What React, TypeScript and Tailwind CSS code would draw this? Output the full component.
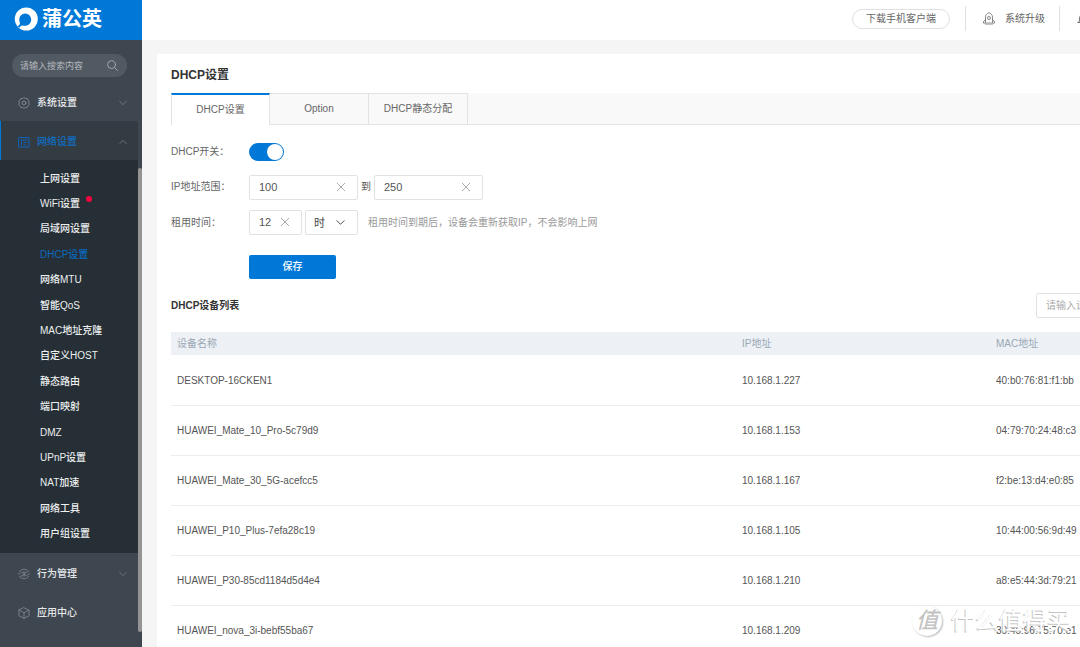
import { useState } from "react";
import type { ReactNode } from "react";

const subItems = [
  "上网设置", "WiFi设置", "局域网设置", "DHCP设置", "网络MTU", "智能QoS", "MAC地址克隆", "自定义HOST",
  "静态路由", "端口映射", "DMZ", "UPnP设置", "NAT加速", "网络工具", "用户组设置",
];

const devices = [
  ["DESKTOP-16CKEN1", "10.168.1.227", "40:b0:76:81:f1:bb"],
  ["HUAWEI_Mate_10_Pro-5c79d9", "10.168.1.153", "04:79:70:24:48:c3"],
  ["HUAWEI_Mate_30_5G-acefcc5", "10.168.1.167", "f2:be:13:d4:e0:85"],
  ["HUAWEI_P10_Plus-7efa28c19", "10.168.1.105", "10:44:00:56:9d:49"],
  ["HUAWEI_P30-85cd1184d5d4e4", "10.168.1.210", "a8:e5:44:3d:79:21"],
  ["HUAWEI_nova_3i-bebf55ba67", "10.168.1.209", "30:45:96:75:70:e1"],
];

function Icon({ children, className = "" }: { children: ReactNode; className?: string }) {
  return (
    <svg viewBox="0 0 12 12" fill="none" stroke="currentColor" strokeLinecap="round" strokeLinejoin="round" className={`shrink-0 ${className}`} aria-hidden="true">
      {children}
    </svg>
  );
}

function Chevron({ up = false, className = "" }: { up?: boolean; className?: string }) {
  return (
    <Icon className={className}>
      <path d={up ? "M2 8l4-4 4 4" : "M2 4l4 4 4-4"} />
    </Icon>
  );
}

const gear = (
  <Icon className="size-3">
    <path strokeWidth="0.9" d="M6 .7l1.500.8 1.800.1.9 1.500 1 1.400-.5 1.500.5 1.600-1.200 1.300-.9 1.500-1.700.1-1.400.8-1.500-.8-1.700-.1-.9-1.500L.8 7.600 1.300 6 .8 4.500l1.100-1.400.9-1.500 1.700-.1z" />
    <circle cx="6" cy="6" r="1.900" strokeWidth="0.9" />
  </Icon>
);
const network = (
  <Icon className="size-3">
    <path d="M1 1.500h10v9.500H1zM3.500 4h5.500M3.500 4v5M6 6.500h2.500M6 8.800h1.500" />
  </Icon>
);
const behaviour = (
  <Icon className="size-3">
    <path strokeWidth="0.8" d="M1.500 3.600a5.200 5.200 0 0 1 9 0M10.500 8.400a5.200 5.200 0 0 1-9 0M.6 6.200c1.800 0 2-2 3.800-2h4.400M11.400 5.800c-1.800 0-2 2-3.800 2H3.200" />
    <circle cx="6" cy="6" r="0.900" strokeWidth="0.8" />
  </Icon>
);
const cube = (
  <Icon className="size-3">
    <path strokeWidth="0.8" d="M6 .8l5 2.400v5.600L6 11.300 1 8.800V3.200zM1 3.200l5 2.500 5-2.500M6 5.700v5.600" />
  </Icon>
);

function MenuRow({ icon, label, active = false, chevron }: { icon: ReactNode; label: string; active?: boolean; chevron?: "up" | "down" }) {
  return (
    <button
      type="button"
      className={`flex h-[39px] w-full items-center border-l pt-0.5 pr-[10px] pl-[17px] text-left ${
        active ? "border-[#0078d7] bg-[#343c43] text-[#0f6dc0]" : "border-transparent text-[#e6e8ea]"
      }`}
    >
      <span className={`mr-[7px] ${active ? "text-[#0f62bb]" : "text-[#858c93]"}`}>{icon}</span>
      <span className="flex-1 font-medium">{label}</span>
      {chevron && <Chevron up={chevron === "up"} className="size-[10px] text-[#747c84]" />}
    </button>
  );
}

function ClearableInput({ id, label, value, className }: { id: string; label: string; value: string; className: string }) {
  const [text, setText] = useState(value);
  return (
    <div className={`flex h-[25px] items-center rounded-xs border border-[#e2e2e2] bg-white pb-px pl-[9px] ${className}`}>
      <input id={id} aria-label={label} value={text} onChange={(e) => setText(e.target.value)} className="w-full min-w-0 flex-1 bg-transparent text-[11px] text-[#555] outline-none" />
      <button type="button" aria-label="清除" onClick={() => setText("")} className="text-[#999]">
        <Icon className="size-[10px]">
          <path d="M1.500 1.500l9 9M10.500 1.500l-9 9" />
        </Icon>
      </button>
    </div>
  );
}

function Sidebar() {
  return (
    <aside className="flex w-[142px] shrink-0 flex-col bg-[#3e464f]">
      <a href="#home" className="flex h-10 shrink-0 items-center gap-1 bg-[#0078d7] pb-0.5 pl-[14px] text-white">
        <svg viewBox="0 0 24 24" className="size-6" aria-hidden="true">
          <circle cx="12.300" cy="12" r="11.500" fill="currentColor" />
          <path fill="#0078d7" d="M11.200 6.500a6 6 0 0 1 6 6c0 3.200-2.200 5.900-5.400 6.300-1.500.2-2.700-.3-3.700-.2-1 .1-1.700.9-2.600 2.200L3.400 19.300c1.300-.7 2.200-1.500 2.500-2.300.4-1.200-.7-2.300-.7-4.500a6 6 0 0 1 6-6z" />
        </svg>
        <span className="text-[20px] leading-6 font-bold">蒲公英</span>
      </a>
      <div className="flex min-h-0 flex-1">
        <div className="flex flex-1 flex-col pt-[14px]">
          <div className="mr-[11px] mb-[5px] ml-3 flex h-[23px] shrink-0 items-center rounded-full bg-[#515962] pr-[9px] pl-2">
            <input aria-label="搜索" placeholder="请输入搜索内容" className="w-full min-w-0 flex-1 bg-transparent text-[9px] text-white outline-none placeholder:text-[#b4b8bc]" />
            <Icon className="size-[11px] text-[#a9aeb3]">
              <circle cx="5" cy="5" r="4.300" />
              <path d="M8.200 8.200l3.200 3.200" />
            </Icon>
          </div>
          <MenuRow icon={gear} label="系统设置" chevron="down" />
          <MenuRow icon={network} label="网络设置" active chevron="up" />
          <ul className="grid h-[393px] shrink-0 auto-rows-fr bg-[#262f36] pt-[6px] pb-[6px] pl-10 font-medium">
            {subItems.map((item) => (
              <li key={item} className="flex items-center">
                <a href={`#${item}`} className={`relative ${item === "DHCP设置" ? "text-[#0a6abf]" : "text-[#eceeef]"}`}>
                  {item}
                  {item === "WiFi设置" && <i className="absolute top-0 -right-3 size-[6px] rounded-full bg-[#f5053f]" />}
                </a>
              </li>
            ))}
          </ul>
          <MenuRow icon={behaviour} label="行为管理" chevron="down" />
          <MenuRow icon={cube} label="应用中心" />
        </div>
        <div className="w-1 pt-32 pb-[15px]">
          <div className="h-full rounded-full bg-[#949494]" />
        </div>
      </div>
    </aside>
  );
}

function TopBar() {
  return (
    <header className="flex h-10 shrink-0 items-center justify-end bg-white pr-[113px] pb-[3px] text-[#666]">
      <button type="button" className="h-5 rounded-full border border-[#e0e0e0] px-[13px]">下载手机客户端</button>
      <span className="ml-[15px] h-[25px] border-l border-[#e0e0e0]" />
      <a href="#upgrade" className="ml-4 flex items-center gap-[9px]">
        <svg viewBox="0 0 14 14" fill="none" stroke="currentColor" strokeWidth="0.9" strokeLinejoin="round" className="size-[14px] text-[#777]" aria-hidden="true">
          <path d="M3.500 10.800V5.200C3.500 3 5 1.500 7 .6c2 .9 3.500 2.400 3.500 4.600v5.600M3.500 7.800L1.500 9.500v1.600h11V9.500l-2-1.700M4 12v.9M6 12v1M8 12v1M10 12v.9" />
          <circle cx="7" cy="6" r="1.500" />
        </svg>
        系统升级
      </a>
      <span className="ml-[14px] h-[25px] border-l border-[#e0e0e0]" />
      <button type="button" aria-label="消息" className="ml-[17px] text-[#777]">
        <Icon className="size-3">
          <path d="M1 9.500h10L9.500 8V5a3.500 3.500 0 0 0-7 0v3zM5 11h2" />
        </Icon>
      </button>
    </header>
  );
}

function Watermark() {
  return (
    <div className="pointer-events-none absolute right-[9px] bottom-[10px] flex items-center gap-[9px]" aria-hidden="true">
      <span className="flex size-[30px] items-center justify-center rounded-full bg-white text-[22px] leading-none font-medium text-[#c4c4c4] italic shadow-[1px_1px_2px_#bbb]">值</span>
      <span className="text-[24px] leading-8 text-white [text-shadow:-1px_1px_0_#c4c4c4]">什么值得买</span>
    </div>
  );
}

export default function App() {
  const [enabled, setEnabled] = useState(true);
  const [tab, setTab] = useState("DHCP设置");
  return (
    <div className="relative flex h-screen overflow-hidden bg-[#f5f5f5] font-['Liberation_Sans','Noto_Sans_CJK_SC',sans-serif] text-[10px] leading-4 text-[#666]">
      <Sidebar />
      <div className="flex min-w-[1060px] flex-1 flex-col">
        <TopBar />
        <main className="mt-[14px] ml-[15px] flex-1 bg-white px-[14px] pt-3">
          <h1 className="text-[12px] leading-[18px] font-bold text-[#333]">DHCP设置</h1>
          <div role="tablist" className="mt-[9px] flex h-8 border-b border-[#e2e2e2] bg-[#f9f9f9]">
            {["DHCP设置", "Option", "DHCP静态分配"].map((name) => (
              <button
                key={name}
                type="button"
                role="tab"
                aria-selected={tab === name}
                onClick={() => setTab(name)}
                className={`w-[99px] shrink-0 border-r border-[#e2e2e2] ${
                  tab === name ? "-mb-px border-t-2 border-l border-t-[#0078d7] bg-white pb-px" : "border-t"
                }`}
              >
                {name}
              </button>
            ))}
          </div>
          <form className="mt-[14px]" onSubmit={(e) => e.preventDefault()}>
            <div className="flex h-[25px] items-center">
              <label htmlFor="dhcp" className="w-[78px]">DHCP开关：</label>
              <input
                id="dhcp"
                type="checkbox"
                role="switch"
                checked={enabled}
                onChange={(e) => setEnabled(e.target.checked)}
                className="h-[18px] w-[35px] appearance-none rounded-full bg-[#ccc] p-px before:block before:size-4 before:rounded-full before:bg-white checked:bg-[#0078d7] checked:before:ml-auto"
              />
            </div>
            <div className="mt-[11px] flex h-[25px] items-center">
              <label htmlFor="start" className="w-[78px] pb-0.5">IP地址范围：</label>
              <ClearableInput id="start" label="起始地址" value="100" className="w-[109px] pr-[11px]" />
              <span className="w-4 pb-0.5 text-center text-[#555]">到</span>
              <ClearableInput id="end" label="结束地址" value="250" className="w-[109px] pr-[11px]" />
            </div>
            <div className="mt-[10px] flex h-[25px] items-center">
              <label htmlFor="lease" className="w-[78px]">租用时间：</label>
              <ClearableInput id="lease" label="租用时间" value="12" className="w-[53px] pr-[11px]" />
              <div className="relative ml-[3px]">
                <select aria-label="时间单位" className="block h-[25px] w-[53px] appearance-none rounded-xs border border-[#e2e2e2] bg-white pl-2 text-[11px] text-[#444]">
                  <option>时</option>
                  <option>分</option>
                </select>
                <Chevron className="pointer-events-none absolute top-[7px] right-3 size-[11px] text-[#444]" />
              </div>
              <span className="ml-[10px] text-[#999]">租用时间到期后，设备会重新获取IP，不会影响上网</span>
            </div>
            <button type="submit" className="mt-5 ml-[78px] block h-6 w-[87px] rounded-xs bg-[#0078d7] font-medium text-white">保存</button>
          </form>
          <div className="mt-[14px] flex h-[25px] items-center justify-between">
            <h2 className="font-bold text-[#333]">DHCP设备列表</h2>
            <input aria-label="搜索设备" placeholder="请输入设备名称" className="h-[25px] w-[152px] rounded-xs border border-[#e2e2e2] px-[9px] outline-none placeholder:text-[#aaa]" />
          </div>
          <table className="mt-[14px] w-full table-fixed border-collapse text-left text-[#555]">
            <thead>
              <tr className="h-[23px] bg-[#edf1f6] text-[#9aa7b4]">
                <th className="w-[565px] pt-px pl-[6px] font-normal">设备名称</th>
                <th className="w-[254px] pt-px pl-[6px] font-normal">IP地址</th>
                <th className="pt-px pl-[6px] font-normal">MAC地址</th>
              </tr>
            </thead>
            <tbody>
              {devices.map((row) => (
                <tr key={row[0]} className="h-[50px] border-b border-[#ececec]">
                  {row.map((cell) => (
                    <td key={cell} className="pt-0.5 pl-[6px]">{cell}</td>
                  ))}
                </tr>
              ))}
            </tbody>
          </table>
        </main>
      </div>
      <Watermark />
    </div>
  );
}
